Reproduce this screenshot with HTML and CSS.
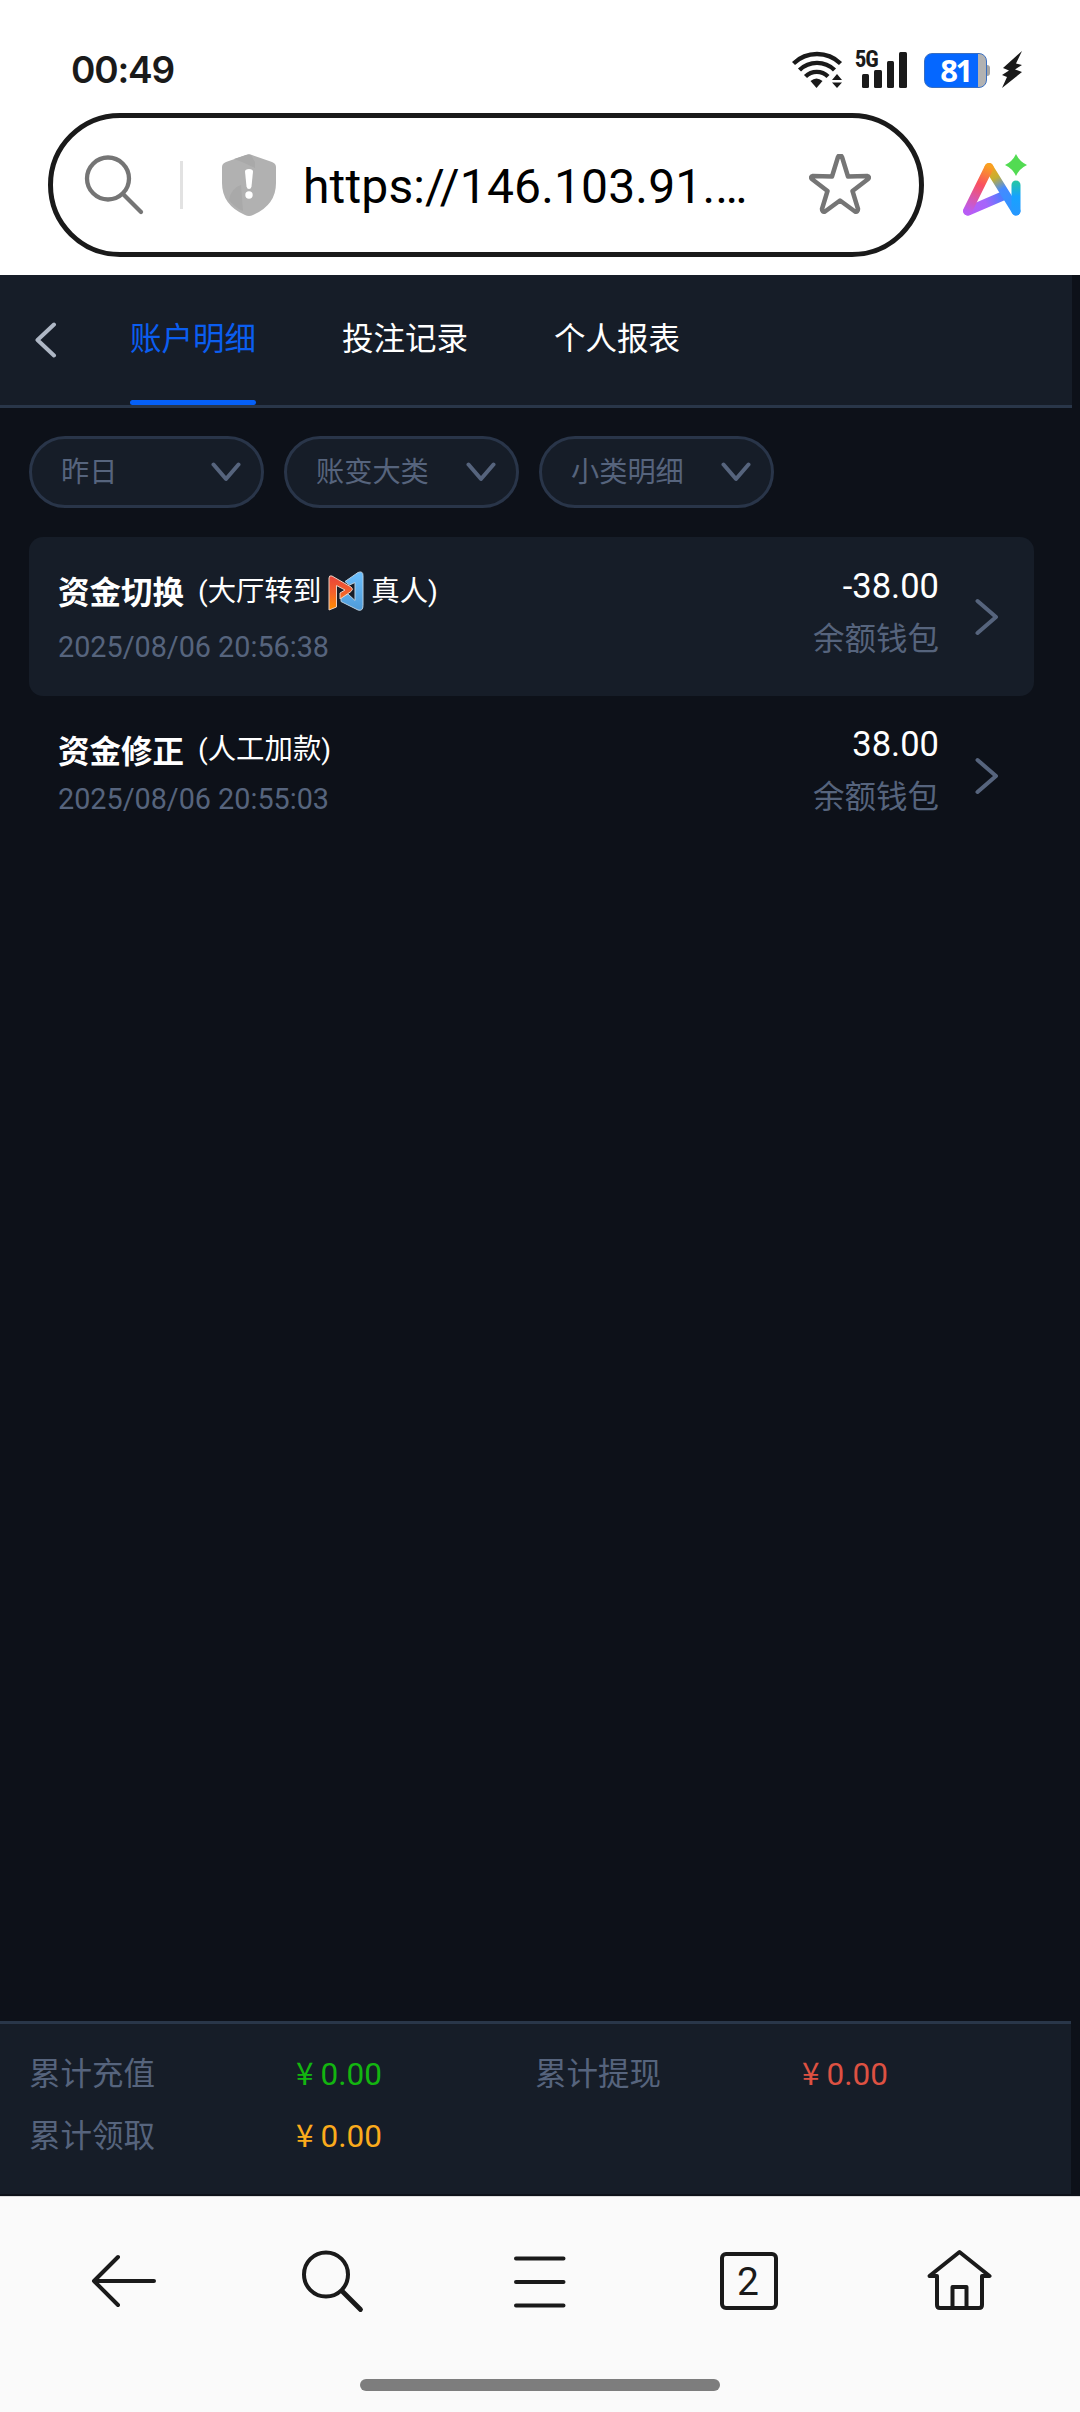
FILE: index.html
```html
<!DOCTYPE html>
<html lang="zh-CN">
<head>
	<meta charset="utf-8">
	<title>账户明细</title>
	<link rel="stylesheet" href="styles.css">
</head>
<body>

<!-- status bar -->
<div class="status">
	<span class="clock">00:49</span>
	<div class="status-icons">
		<svg class="wifi" width="52" height="38" viewBox="0 0 52 38">
			<g fill="none" stroke="#1a1a1a" stroke-width="4.4">
				<path d="M1.500 12.500a34 34 0 0 1 47 0"/>
				<path d="M7.500 19a25 25 0 0 1 35 0"/>
				<path d="M13.500 25.500a16 16 0 0 1 22.500 0"/>
			</g>
			<path d="M18.500 30q6-5 12 0l-6 7z" fill="#1a1a1a"/>
			<path d="M40 29l5-6 5 6zM40 31.500h10l-5 5.500z" fill="#1a1a1a"/>
		</svg>
		<div class="signal">
			<span class="net">5G</span>
			<i class="bar b1"></i><i class="bar b2"></i><i class="bar b3"></i><i class="bar b4"></i>
		</div>
		<div class="battery"><span>81</span></div>
		<svg class="bolt" width="21" height="38" viewBox="0 0 21 38">
			<path d="M20 0L1 17l6 2.500L0 24l5 2L0 37l20-16-7-2.500L20 14l-6-1.500z" fill="#1a1a1a"/>
		</svg>
	</div>
</div>

<!-- address bar -->
<div class="address">
	<div class="url-box">
		<svg class="url-search" width="62" height="62" viewBox="0 0 62 62" fill="none" stroke="#757575" stroke-width="4.300" stroke-linecap="round">
			<circle cx="24" cy="24.500" r="21"/>
			<path d="M39 40L57 58"/>
		</svg>
		<span class="split"></span>
		<svg class="shield" width="54" height="62" viewBox="0 0 54 62">
			<path d="M24 1q3-1.500 6 0l20 7q4 1.500 4 5v16q0 22-23 32-4 2-8 0Q0 51 0 29V13q0-3.500 4-5z" fill="#b1b1b1"/>
			<path d="M24 1q3-1 5 0l4 7v6L20 8l-8-3z" fill="#a9a9a9"/>
			<path d="M7 46q2-12 12-15l2 26q-9-4-14-11z" fill="#a9a9a9"/>
			<path d="M23 17.500q0-2.500 4-2.500t4 2.500l-1.500 15q-.5 2.500-2.500 2.500t-2.500-2.500z" fill="#fff"/>
			<circle cx="27" cy="41" r="3.700" fill="#fff"/>
		</svg>
		<span class="url">https://146.103.91.…</span>
		<svg class="star" width="62" height="62" viewBox="0 0 62 62" fill="none" stroke="#757575" stroke-width="4.500" stroke-linejoin="round">
			<path d="M29 3q2-3.500 4 0l6 19.500 19-.5q3.500 1 .5 3.500L43.500 37 49 55q0 3.500-3 2.500L31 46.500l-15 11q-3 1-3-2.500l5.500-18L3.500 25.500Q.5 23 4 22l19 .5z"/>
		</svg>
	</div>
	<svg class="ai" width="64" height="62" viewBox="0 0 64 62">
		<defs>
			<linearGradient id="leg" x1="26" y1="12" x2="5" y2="58" gradientUnits="userSpaceOnUse">
				<stop offset="0" stop-color="#f9a020"/>
				<stop offset=".4" stop-color="#fa5060"/>
				<stop offset="1" stop-color="#b85cf5"/>
			</linearGradient>
			<linearGradient id="cross" x1="5" y1="58" x2="42" y2="42" gradientUnits="userSpaceOnUse">
				<stop offset="0" stop-color="#b85cf5"/>
				<stop offset=".5" stop-color="#a565fb"/>
				<stop offset="1" stop-color="#3f80ff"/>
			</linearGradient>
			<linearGradient id="right" x1="26" y1="12" x2="53" y2="58" gradientUnits="userSpaceOnUse">
				<stop offset="0" stop-color="#f9a020"/>
				<stop offset=".25" stop-color="#c5b030"/>
				<stop offset=".5" stop-color="#458aff"/>
				<stop offset="1" stop-color="#2698ff"/>
			</linearGradient>
			<linearGradient id="stem" x1="0" y1="28" x2="0" y2="60" gradientUnits="userSpaceOnUse">
				<stop offset="0" stop-color="#25c5a8"/>
				<stop offset=".45" stop-color="#16a3ff"/>
				<stop offset="1" stop-color="#2698ff"/>
			</linearGradient>
		</defs>
		<g fill="none" stroke-width="9" stroke-linecap="round">
			<path d="M5 57L41 41.500" stroke="url(#cross)"/>
			<path d="M26 13.500L53 57" stroke="url(#right)"/>
			<path d="M26 13.500L4.500 57" stroke="url(#leg)"/>
			<path d="M53 31v26" stroke="url(#stem)"/>
		</g>
		<path d="M53 0q3.500 7.500 11 11-7.500 3.500-11 11-3.500-7.500-11-11 7.500-3.500 11-11z" fill="#52db52"/>
	</svg>
</div>

<!-- web page -->
<div class="page">
	<div class="header">
		<svg class="back" width="22" height="36" viewBox="0 0 22 36" fill="none" stroke="#aeb7c5" stroke-width="4" stroke-linecap="round" stroke-linejoin="round">
			<path d="M19 2.500L2.500 18 19 33.500"/>
		</svg>
		<a class="tab active">账户明细</a>
		<a class="tab">投注记录</a>
		<a class="tab">个人报表</a>
	</div>

	<div class="filters">
		<div class="filter"><span>昨日</span>
			<svg width="30" height="20" viewBox="0 0 30 20"><path d="M2.500 2.500L15 17l12.500-14.500"/></svg>
		</div>
		<div class="filter"><span>账变大类</span>
			<svg width="30" height="20" viewBox="0 0 30 20"><path d="M2.500 2.500L15 17l12.500-14.500"/></svg>
		</div>
		<div class="filter"><span>小类明细</span>
			<svg width="30" height="20" viewBox="0 0 30 20"><path d="M2.500 2.500L15 17l12.500-14.500"/></svg>
		</div>
	</div>

	<div class="list">
		<div class="item odd">
			<div class="info">
				<div class="title"><b>资金切换</b>
					<span class="note">(大厅转到<svg class="brand" width="36" height="40" viewBox="0 0 36 40">
						<defs>
							<linearGradient id="warm" x1="0" y1="0" x2="0" y2="1">
								<stop offset="0" stop-color="#e8433a"/>
								<stop offset=".5" stop-color="#f4622a"/>
								<stop offset="1" stop-color="#ff8f00"/>
							</linearGradient>
							<linearGradient id="cool" x1="0" y1="0" x2="0" y2="1">
								<stop offset="0" stop-color="#6cc0ff"/>
								<stop offset="1" stop-color="#4f9bd8"/>
							</linearGradient>
						</defs>
						<path d="M17 10.500L30 1.500q5-2 5 3v30q0 6-5 4.500L13 30.500V27l7-4 7 6.500V11.500L21.500 14z" fill="url(#cool)" stroke="#b9cfe0"/>
						<path d="M1 7q0-3 3-2l19 11q3 2 0 4.500L12 28v-6l5-3-8.500-4.500V36L1 39z" fill="url(#warm)" stroke="#ecd0c0"/>
					</svg>真人)</span>
				</div>
				<div class="date">2025/08/06 20:56:38</div>
			</div>
			<div class="sum">
				<div class="amount">-38.00</div>
				<div class="wallet">余额钱包</div>
			</div>
			<svg class="more" width="24" height="38" viewBox="0 0 24 38"><path d="M2.500 3L21 19 2.500 35"/></svg>
		</div>
		<div class="item">
			<div class="info">
				<div class="title"><b>资金修正</b>
					<span class="note">(人工加款)</span>
				</div>
				<div class="date">2025/08/06 20:55:03</div>
			</div>
			<div class="sum">
				<div class="amount">38.00</div>
				<div class="wallet">余额钱包</div>
			</div>
			<svg class="more" width="24" height="38" viewBox="0 0 24 38"><path d="M2.500 3L21 19 2.500 35"/></svg>
		</div>
	</div>

	<div class="totals">
		<span>累计充值</span><span class="money green"><i>¥</i>0.00</span>
		<span>累计提现</span><span class="money red"><i>¥</i>0.00</span>
		<span>累计领取</span><span class="money orange"><i>¥</i>0.00</span>
	</div>
</div>

<!-- browser toolbar -->
<div class="toolbar">
	<div class="buttons">
		<svg width="72" height="72" viewBox="0 0 72 72">
			<path d="M66 36H6M30 12L6 36l24 24"/>
		</svg>
		<svg width="72" height="72" viewBox="0 0 72 72">
			<circle cx="30" cy="29.500" r="22"/>
			<path d="M46 46l18.500 18.500" stroke-width="4.800"/>
		</svg>
		<svg width="72" height="72" viewBox="0 0 72 72">
			<path d="M12 13.500h47.500M12 37h47.500M12 60.500h47.500"/>
		</svg>
		<div class="tabs-count">2</div>
		<svg width="72" height="72" viewBox="0 0 72 72">
			<path d="M17 31H9.500L39.500 7l30 24H62v29q0 3-3 3H20q-3 0-3-3zM32.500 63V42h14v21"/>
		</svg>
	</div>
	<div class="home-bar"></div>
</div>

</body>
</html>
```
FILE: styles.css
```css
* {
	box-sizing: border-box;
}
body {
	margin: 0;
	width: 1080px;
	height: 2412px;
	display: flex;
	flex-direction: column;
	overflow: hidden;
	background: #fff;
	font-family: Roboto, "Noto Sans CJK SC", sans-serif;
}
svg {
	display: block;
	flex: none;
}
i {
	font-style: normal;
}

/* status bar */
.status {
	height: 113px;
	padding: 26px 57px 0 71px;
	display: flex;
	justify-content: space-between;
	align-items: center;
	color: #1a1a1a;
}
.clock {
	font: 600 37px/44px Inter, sans-serif;
	height: 44px;
	letter-spacing: -1.200px;
}
.status-icons {
	display: flex;
	align-items: flex-end;
	height: 38px;
}
.signal {
	position: relative;
	display: flex;
	align-items: flex-end;
	gap: 5px;
	margin-left: 18px;
	height: 38px;
	padding-bottom: 1px;
}
.net {
	position: absolute;
	left: -7px;
	top: 0;
	font: 700 23px/18px "Roboto Condensed", Roboto, sans-serif;
	letter-spacing: -1px;
}
.bar {
	width: 7.600px;
	border-radius: 1.500px;
	background: #1a1a1a;
}
.b1 { height: 14px; }
.b2 { height: 18px; }
.b3 { height: 27px; }
.b4 { height: 36px; }
.battery {
	position: relative;
	width: 63px;
	height: 35px;
	margin: 0 15px 1px 17px;
	border: 1px solid #3a6fc0;
	border-radius: 8px;
	background: linear-gradient(to right, #0567ff 53px, #b2b2b2 53px);
	color: #fff;
	text-align: center;
	font: 700 31px/33px "Open Sans", sans-serif;
	letter-spacing: -2.500px;
}
.battery:after {
	content: "";
	position: absolute;
	right: -4px;
	top: 11px;
	width: 3px;
	height: 11px;
	border-radius: 0 3px 3px 0;
	background: #a5a5a5;
}

/* address bar */
.address {
	height: 162px;
	padding: 0 53px 0 48px;
	display: flex;
	justify-content: space-between;
}
.url-box {
	width: 876px;
	height: 144px;
	padding: 0 48px 0 31px;
	border: 5px solid #1a1a1a;
	border-radius: 72px;
	display: flex;
	align-items: center;
}
.split {
	width: 3px;
	height: 48px;
	margin: 0 39px 0 34px;
	background: #e2e2e2;
}
.url {
	flex: 1;
	margin-left: 27px;
	padding-top: 3px;
	font-size: 48px;
	letter-spacing: .15px;
	color: #000;
	white-space: nowrap;
}
.ai {
	margin-top: 41px;
}

/* web page */
.page {
	height: 1921px;
	padding-bottom: 2px;
	display: flex;
	flex-direction: column;
	background: #0d1119;
}
.header {
	width: 1072px;
	height: 133px;
	padding-left: 35px;
	display: flex;
	background: #161d28;
	border-bottom: 3px solid #293649;
}
.back {
	margin: 47px 73px 0 0;
}
.tab {
	height: 130px;
	margin-right: 86px;
	color: #fff;
	font-size: 31.500px;
	line-height: 129px;
}
.active {
	position: relative;
	color: #0b5ef0;
}
.active:after {
	content: "";
	position: absolute;
	left: 0;
	bottom: 0;
	width: 100%;
	height: 5px;
	border-radius: 3px;
	background: #0560f8;
}
.filters {
	display: flex;
	gap: 20px;
	padding: 28px 29px 29px;
}
.filter {
	width: 235px;
	height: 72px;
	padding: 0 20px 0 29px;
	border: 3px solid #293549;
	border-radius: 36px;
	background: #161d28;
	display: flex;
	align-items: center;
	justify-content: space-between;
	font-size: 28.200px;
	color: #56647d;
}
.filter span {
	padding-bottom: 5px;
}
.filter svg, .more {
	fill: none;
	stroke: #56647d;
	stroke-width: 4;
	stroke-linecap: round;
	stroke-linejoin: round;
}
.list {
	flex: 1;
	padding: 0 46px 0 29px;
}
.item {
	height: 158.500px;
	padding: 0 35px 0 29px;
	border-radius: 14px;
	display: flex;
}
.odd {
	background: #161d28;
}
.info {
	flex: 1;
}
.title {
	display: flex;
	align-items: center;
	height: 40px;
	margin-top: 33px;
	color: #fff;
	font-size: 31.500px;
}
.note {
	display: flex;
	align-items: center;
	height: 40px;
	margin: 0 0 4px 14px;
	font-size: 28.400px;
}
.brand {
	margin: 5px 7px 0 7px;
}
.date {
	margin-top: 20px;
	font-size: 28.750px;
	line-height: 34px;
	color: #56647d;
}
.item:not(.odd) .date {
	margin-top: 13.500px;
}
.sum {
	text-align: right;
	margin-right: 36px;
}
.amount {
	margin-top: 28px;
	font-size: 34.500px;
	line-height: 42px;
	color: #fff;
}
.wallet {
	margin-top: 11px;
	font-size: 31.500px;
	line-height: 44px;
	color: #56647d;
}
.item:not(.odd) .amount {
	margin-top: 27.500px;
}
.more {
	margin-top: 61px;
}
.totals {
	width: 1071px;
	height: 173px;
	padding: 20px 29px 0;
	border-top: 3px solid #293649;
	background: #161d28;
	display: grid;
	grid-template-columns: 267px 239px 267px 239px;
	grid-auto-rows: 62px;
	font-size: 31.500px;
	line-height: 62px;
	color: #56647d;
}
.money {
	margin-top: -4px;
}
.money i {
	margin-right: 7px;
	font-family: "Noto Sans CJK SC", sans-serif;
}
.green { color: #13b510; }
.red { color: #dd5142; }
.orange { color: #fbab1c; }

/* browser toolbar */
.toolbar {
	flex: 1;
	background: #fafafa;
	border-top: 1px solid #dcdcdc;
}
.buttons {
	height: 182px;
	padding: 48px 20px 0;
	display: grid;
	grid-template-columns: repeat(5, 208px);
	justify-items: center;
	align-items: start;
}
.buttons svg {
	fill: none;
	stroke: #1a1a1a;
	stroke-width: 4;
	stroke-linecap: round;
	stroke-linejoin: round;
}
.tabs-count {
	width: 58px;
	height: 58px;
	margin: 7px 0 0 2px;
	padding-right: 2px;
	border: 4px solid #1a1a1a;
	border-radius: 6px;
	font-size: 39px;
	line-height: 53px;
	text-align: center;
	color: #1a1a1a;
}
.home-bar {
	width: 360px;
	height: 12px;
	margin: 0 auto;
	border-radius: 6px;
	background: #7d7d7d;
}
```
